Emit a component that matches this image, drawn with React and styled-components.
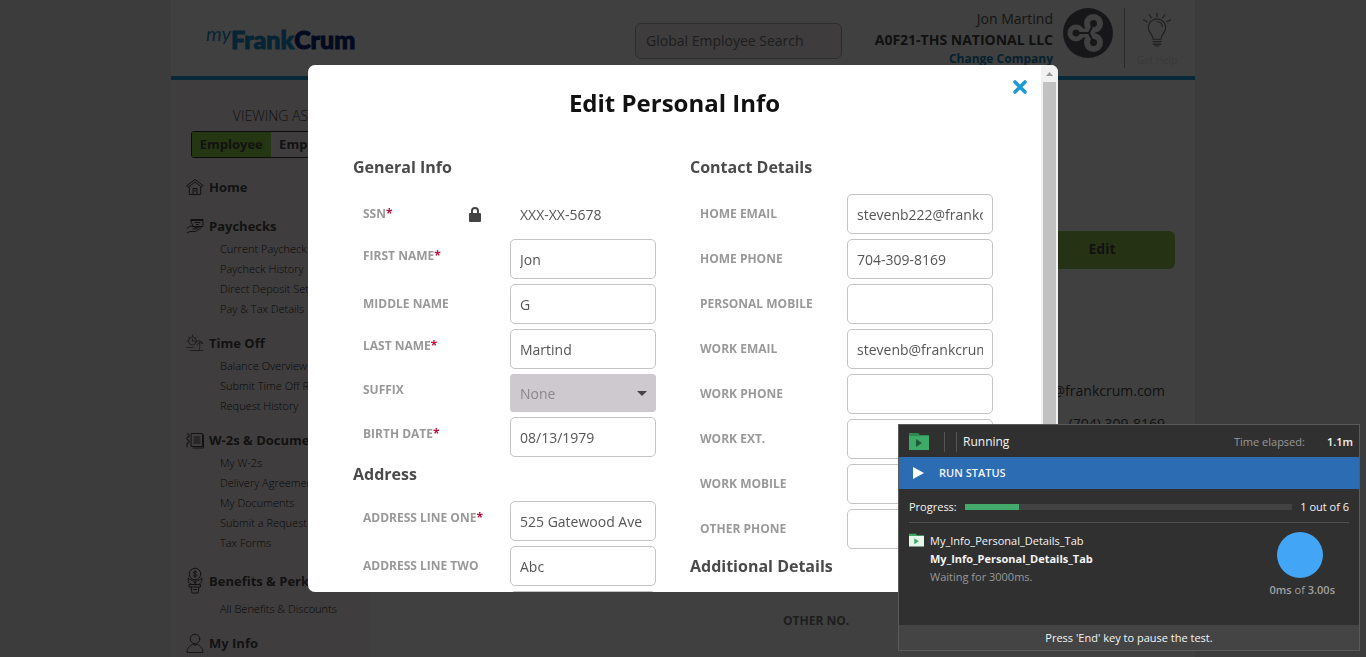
import React from "react";
import styled, { createGlobalStyle, css } from "styled-components";

const GlobalStyle = createGlobalStyle`
  *, *::before, *::after { box-sizing: border-box; }
  html, body { height: 100%; }
  body {
    margin: 0;
    overflow: hidden;
    background: #f0f0f0;
    color: #444;
    font-family: "Open Sans", "Noto Sans", sans-serif;
    font-size: 14px;
  }
  button, input, select { font: inherit; color: inherit; }
  h1, h2, p, ul, dl, dd { margin: 0; padding: 0; }
  ul { list-style: none; }
`;

/* ---------- Page ---------- */

const Page = styled.div`
  max-width: 1024px;
  margin: 0 auto;
  background: #fff;
`;

const Header = styled.header`
  display: flex;
  height: 80px;
  padding-right: 6px;
  border-bottom: 4px solid #1fa4e6;
`;

const Brand = styled.a`
  display: flex;
  align-items: baseline;
  align-self: center;
  margin: 2px 0 0 35px;
  color: #1b8fce;
  font: 900 25px/32px Lato, sans-serif;
  -webkit-text-stroke: 1px currentColor;
  text-decoration: none;
`;

const BrandScript = styled.span`
  align-self: flex-start;
  font: italic 400 20px/20px Lato, sans-serif;
  -webkit-text-stroke: 0;
`;

const BrandDark = styled.span`
  color: #0c2a80;
`;

const Search = styled.input`
  width: 207px;
  height: 36px;
  margin: 23px 0 0 auto;
  padding: 0 10px 2px;
  border: 1px solid #b8b4b6;
  border-radius: 6px;
  background: #f5eef2;
  &::placeholder { color: #777; opacity: 1; }
`;

const Account = styled.div`
  width: 211px;
  padding-top: 8px;
  text-align: right;
  line-height: 21px;
  white-space: nowrap;
`;

const AccountName = styled.p`
  color: #555;
`;

const Company = styled.p`
  color: #444;
  font-weight: 700;
`;

const CompanyLink = styled.a`
  display: block;
  color: #1583bd;
  font-size: 12px;
  font-weight: 700;
  line-height: 18px;
  text-decoration: none;
`;

const Avatar = styled.svg`
  width: 50px;
  height: 50px;
  margin: 8px 11px 0 10px;
`;

const Help = styled.button`
  display: flex;
  flex-direction: column;
  align-items: center;
  gap: 5px;
  width: 65px;
  height: 60px;
  margin-top: 8px;
  padding: 4px 0 0;
  border: 0;
  border-left: 1px solid #aaa;
  background: none;
  color: #e2e2e2;
  font-size: 10px;
  line-height: 16px;
`;

const Body = styled.div`
  display: flex;
  min-height: calc(100vh - 80px);
`;

const Sidebar = styled.nav`
  width: 199px;
  padding: 26px 0 0 15px;
  background: #fcf4f6;
  color: #4a4a4a;
`;

const Viewing = styled.p`
  padding-right: 15px;
  color: #444;
  font-weight: 300;
  line-height: 20px;
  text-align: center;
`;

const Toggle = styled.div`
  display: flex;
  width: 159px;
  height: 27px;
  margin: 5px 0 18px 5px;
  border: 1px solid #333;
  border-radius: 3px;
  overflow: hidden;
`;

const ToggleButton = styled.button`
  flex: 1;
  padding: 0 0 2px;
  border: 0;
  background: ${(p) => (p.$active ? "#90d648" : "transparent")};
  font-size: 13px;
  font-weight: 700;
`;

const Group = styled.li`
  margin-bottom: ${(p) => (p.$solo ? 18 : 13)}px;
`;

const GroupTitle = styled.a`
  display: flex;
  align-items: center;
  gap: 5px;
  min-height: 21px;
  margin-bottom: 3px;
  color: inherit;
  font-size: 13px;
  font-weight: 700;
  text-decoration: none;
  white-space: nowrap;
`;

const SubLink = styled.a`
  display: block;
  padding-left: 34px;
  color: #222;
  font-size: 11px;
  font-weight: 300;
  line-height: 20px;
  text-decoration: none;
  white-space: nowrap;
`;

const Main = styled.main`
  flex: 1;
  display: flex;
  flex-direction: column;
  align-items: flex-end;
  padding: 151px 20px 0;
`;

const EditButton = styled.button`
  width: 146px;
  height: 38px;
  padding: 0 0 3px;
  border: 0;
  border-radius: 6px;
  background: #92cc50;
  color: #444;
  font-weight: 700;
`;

const Contacts = styled.dl`
  width: 382px;
  margin: 105px 10px 0 0;
  color: #444;
`;

const OtherContacts = styled(Contacts)`
  margin-top: 164px;
`;

const ContactRow = styled.div`
  display: flex;
  justify-content: space-between;
  line-height: 33px;
`;

const ContactLabel = styled.dt`
  color: #777;
  font-size: 12px;
  font-weight: 700;
`;

/* ---------- Modal ---------- */

const Overlay = styled.div`
  position: fixed;
  inset: 0;
  display: flex;
  align-items: center;
  justify-content: center;
  background: rgba(0, 0, 0, 0.75);
`;

const Modal = styled.section`
  position: relative;
  display: flex;
  width: 750px;
  height: calc(100vh - 130px);
  border-radius: 7px;
  background: #fff;
  overflow: hidden;
`;

const ModalContent = styled.div`
  flex: 1;
  padding: 22px 14px 20px 45px;
  overflow-y: auto;
  scrollbar-width: none;
`;

const ModalTitle = styled.h1`
  margin-right: 31px;
  color: #111;
  font-size: 24px;
  font-weight: 700;
  line-height: 32px;
  text-align: center;
`;

const Close = styled.button`
  position: absolute;
  top: 15px;
  right: 31px;
  width: 14px;
  height: 14px;
  padding: 0;
  border: 0;
  background: none;
  svg { display: block; }
`;

const ScrollTrack = styled.div`
  display: flex;
  flex-direction: column;
  align-items: center;
  width: 17px;
  background: #f1f1f1;
`;

const ScrollArrow = styled.svg`
  width: 17px;
  height: 17px;
`;

const ScrollThumb = styled.div`
  width: 13px;
  height: 420px;
  background: #c1c1c1;
`;

const Columns = styled.form`
  display: grid;
  grid-template-columns: 1fr 1fr;
  margin-top: 36px;
`;

const SectionTitle = styled.h2`
  margin-bottom: 15px;
  color: #4a4a4a;
  font-size: 16px;
  font-weight: 700;
  line-height: 24px;
`;

const FieldRow = styled.div`
  display: flex;
  align-items: center;
  margin-bottom: 5px;
`;

const Label = styled.label`
  width: 157px;
  padding-left: 10px;
  padding-bottom: ${(p) => (p.$raised ? 7 : 1)}px;
  color: #999;
  font-size: 12px;
  font-weight: 700;
  line-height: 16px;
`;

const SsnLabel = styled(Label)`
  display: flex;
  justify-content: space-between;
  padding-right: 29px;
`;

const Star = styled.span`
  color: #b8123a;
`;

const control = css`
  width: 146px;
  height: 40px;
  padding: 0 9px;
  border: 1px solid #c4c4c4;
  border-radius: 5px;
  background: #fff;
  color: #555;
`;

const TextInput = styled.input`
  ${control}
`;

const StaticValue = styled.output`
  ${control}
  border-color: transparent;
  line-height: 40px;
`;

const SelectBox = styled.div`
  position: relative;
  width: 146px;
  height: 38px;
`;

const Select = styled.select`
  ${control}
  height: 38px;
  border-color: #cec9ce;
  border-radius: 3px;
  background: #cec9ce;
  color: #888;
  opacity: 1;
  appearance: none;
`;

const Caret = styled.svg`
  position: absolute;
  top: 17px;
  right: 9px;
`;

/* ---------- Test runner panel ---------- */

const Runner = styled.aside`
  position: fixed;
  right: 6px;
  bottom: 6px;
  width: 462px;
  border: 1px solid #5a5a5a;
  background: #303030;
  color: #f4f4f4;
  font-size: 11px;
  line-height: 18px;
`;

const RunnerHeader = styled.div`
  display: flex;
  align-items: center;
  height: 32px;
  padding: 1px 6px 0 10px;
`;

const Separator = styled.span`
  width: 12px;
  height: 20px;
  border-left: 1px solid #555;
`;

const FirstSeparator = styled(Separator)`
  margin-left: 15px;
`;

const State = styled.span`
  margin: 0 auto 0 -5px;
  font-size: 12px;
`;

const Muted = styled.span`
  color: #999;
`;

const Elapsed = styled.span`
  margin-left: 22px;
  font-weight: 600;
`;

const RunnerBar = styled.div`
  display: flex;
  align-items: center;
  gap: 15px;
  height: 32px;
  padding-left: 14px;
  background: #2b6cb3;
  font-weight: 600;
`;

const RunnerBody = styled.div`
  height: 136px;
  padding: 0 10px;
`;

const ProgressRow = styled.div`
  display: flex;
  align-items: center;
  gap: 8px;
  height: 34px;
  padding-top: 2px;
  border-bottom: 1px solid #505050;
  white-space: nowrap;
`;

const Track = styled.div`
  flex: 1;
  height: 6px;
  background: #424242;
`;

const Fill = styled.div`
  height: 6px;
  background: #45ab6d;
`;

const TestRow = styled.div`
  display: flex;
  justify-content: space-between;
  padding: 9px 14px 0 0;
`;

const TestInfo = styled.div`
  display: flex;
  gap: 6px;
  svg { margin-top: 1px; }
`;

const TestName = styled.p`
  font-weight: ${(p) => (p.$bold ? 700 : 400)};
`;

const Timer = styled.div`
  display: flex;
  flex-direction: column;
  align-items: center;
  gap: 3px;
`;

const TimerDisc = styled.div`
  width: 46px;
  height: 46px;
  margin-right: 4px;
  border-radius: 50%;
  background: #42a5f5;
`;

const TimerText = styled(Muted)`
  color: #a0a0a0;
  b { font-weight: 600; }
`;

const RunnerFooter = styled.div`
  height: 25px;
  background: #444;
  line-height: 25px;
  text-align: center;
`;

/* ---------- Drawings ---------- */

const line = { fill: "none", stroke: "#4a4a4a", strokeWidth: 1, strokeLinecap: "round", strokeLinejoin: "round" };

const icons = {
  home: (
    <svg width="18" height="18" viewBox="0 0 18 18" {...line}>
      <path d="M1 7.500 9 1.500l8 6-1.400 1.600L9 4 2.400 9.100z M3.300 9v7.500h11.400V9M7 16v-5.500h4V16M9 12v1.500" />
    </svg>
  ),
  pay: (
    <svg width="18" height="18" viewBox="0 0 18 18" {...line}>
      <path d="M5 3.500h12v6H7.500zM5 2.500h12M9 5.500h5M10.500 7.500h2M1 11.500l3-2.500 3 .5 3.500 1-1 1.500H7M1 16l3-1.500h5.500l6-4-1-1-4.500 2" />
    </svg>
  ),
  time: (
    <svg width="18" height="18" viewBox="0 0 18 18" {...line} stroke="#777">
      <circle cx="6.500" cy="7" r="4" />
      <path d="M6.500 1v1.500M1 7h1.500M2.500 3l1 1M10.500 3l-1 1M6.500 5v2H9M9 9c1-2.500 6-3 8 .5l-3.500-1L11 11M13.500 8.500c.5 3 .3 5 0 8M4 16.500h13M1 13.500c2-1 4 1 6 0" />
    </svg>
  ),
  docs: (
    <svg width="18" height="18" viewBox="0 0 18 18" {...line}>
      <path d="M5.500 2.500h11v13h-11zM17.500 4v13H7M8 6h6M8 8h6M8 10h6M8 12h6M1 3h2v3H1v3h2v3H1v4" />
    </svg>
  ),
  benefits: (
    <svg width="18" height="30" viewBox="0 0 18 30" {...line}>
      <circle cx="9" cy="8" r="5.800" />
      <path d="M10.800 6.300c-1-1.200-3.400-.9-3.400.5 0 1.700 3.500.8 3.500 2.500 0 1.400-2.700 1.600-3.700.3M9 4.700v6.800M9 14v5M9 17c-1-3-4-2-7-5 0 3 1 6 3 6M9 17c1-3 4-2 7-5 0 3-1 6-3 6M3.500 18.500h11v2.500h-11zM5 21l1 6h6l1-6M7.500 23.500h3" />
    </svg>
  ),
  user: (
    <svg width="18" height="20" viewBox="0 0 18 20" {...line}>
      <circle cx="9" cy="6" r="4.800" />
      <path d="M1 19c.3-4.500 3-6 5.500-7.700l2.500 1 2.500-1C14 13 16.700 14.500 17 19z" />
    </svg>
  ),
};

const CompanyMark = () => (
  <Avatar viewBox="0 0 50 50" aria-hidden="true">
    <circle cx="25" cy="25" r="25" fill="#5c5c68" />
    <g fill="#fff">
      <circle cx="13" cy="25" r="8.500" />
      <circle cx="30.500" cy="15.500" r="9.500" />
      <circle cx="30.500" cy="34.500" r="9.500" />
    </g>
    <path d="M14 25h12l4-8M26 25l4 8" fill="none" stroke="#fff" strokeWidth="9" />
    <path d="M13 25h13l4.500-9.500M26 25l4.500 9.500" fill="none" stroke="#5c5c68" strokeWidth="2" />
    <g fill="#5c5c68">
      <circle cx="13" cy="25" r="3.500" />
      <circle cx="30.500" cy="15.500" r="3.500" />
      <circle cx="30.500" cy="34.500" r="3.500" />
    </g>
  </Avatar>
);

const Bulb = () => (
  <svg width="30" height="36" viewBox="0 0 30 36" fill="none" stroke="#777" strokeWidth="1.200" strokeLinecap="round">
    <path d="M11 28c0-5-5-6-5-12a9 9 0 0 1 18 0c0 6-5 7-5 12zM11 30.500h8M11 33h8M13 35h4M15 1v4M7 2.500l2 3.500M23 2.500 21 6M1 8l4 2M29 8l-4 2M15 10c3 0 5.500 2 5.500 5" />
  </svg>
);

const Folder = ({ size, body, tab, arrow }) => (
  <svg width={size} height={size} viewBox="0 0 20 20" aria-hidden="true">
    <path d="M0 1h9l2 2h9v5H0z" fill={tab} />
    <path d="M0 4h20v14H0z" fill={body} />
    <path d="M7 7v8l6-4z" fill={arrow} />
  </svg>
);

/* ---------- Data ---------- */

const menu = [
  { title: "Home", icon: "home", links: [] },
  { title: "Paychecks", icon: "pay", links: ["Current Paycheck", "Paycheck History", "Direct Deposit Setup", "Pay & Tax Details"] },
  { title: "Time Off", icon: "time", links: ["Balance Overview", "Submit Time Off Request", "Request History"] },
  { title: "W-2s & Documents", icon: "docs", links: ["My W-2s", "Delivery Agreement", "My Documents", "Submit a Request", "Tax Forms"] },
  { title: "Benefits & Perks", icon: "benefits", links: ["All Benefits & Discounts"] },
  { title: "My Info", icon: "user", links: [] },
];

const contacts = [
  ["HOME EMAIL", "stevenb222@frankcrum.com"],
  ["HOME PHONE", "(704) 309-8169"],
];

const general = [
  { label: "FIRST NAME", value: "Jon", required: true },
  { label: "MIDDLE NAME", value: "G" },
  { label: "LAST NAME", value: "Martind", required: true },
  { label: "SUFFIX", value: "None", select: true },
  { label: "BIRTH DATE", value: "08/13/1979", required: true },
];

const address = [
  { label: "ADDRESS LINE ONE", value: "525 Gatewood Ave", required: true },
  { label: "ADDRESS LINE TWO", value: "Abc" },
  { label: "CITY", value: "", required: true },
];

const contactFields = [
  { label: "HOME EMAIL", value: "stevenb222@frankcrum.com" },
  { label: "HOME PHONE", value: "704-309-8169" },
  { label: "PERSONAL MOBILE", value: "" },
  { label: "WORK EMAIL", value: "stevenb@frankcrum.com" },
  { label: "WORK PHONE", value: "" },
  { label: "WORK EXT.", value: "" },
  { label: "WORK MOBILE", value: "" },
  { label: "OTHER PHONE", value: "" },
];

function Field({ label, value, required, select }) {
  const id = label.toLowerCase().replace(/[^a-z]+/g, "-");
  return (
    <FieldRow>
      <Label htmlFor={id} $raised={required || select}>
        {label}
        {required && <Star>*</Star>}
      </Label>
      {select ? (
        <SelectBox>
          <Select id={id} disabled defaultValue={value}>
            <option>{value}</option>
          </Select>
          <Caret width="10" height="5" viewBox="0 0 10 5">
            <path d="M0 0h10L5 5z" fill="#444" />
          </Caret>
        </SelectBox>
      ) : (
        <TextInput id={id} type="text" defaultValue={value} />
      )}
    </FieldRow>
  );
}

const Fields = ({ items }) => items.map((f) => <Field key={f.label} {...f} />);

function EditPersonalInfo() {
  return (
    <Modal role="dialog" aria-labelledby="edit-title">
      <ModalContent>
        <ModalTitle id="edit-title">Edit Personal Info</ModalTitle>
        <Columns>
          <div>
            <SectionTitle>General Info</SectionTitle>
            <FieldRow>
              <SsnLabel htmlFor="ssn">
                <span>SSN<Star>*</Star></span>
                <svg width="12" height="16" viewBox="0 0 12 16" aria-hidden="true">
                  <path d="M3 8V5a3 3 0 0 1 6 0v3" fill="none" stroke="#444" strokeWidth="2" />
                  <rect y="7" width="12" height="9" rx="1" fill="#444" />
                </svg>
              </SsnLabel>
              <StaticValue id="ssn">XXX-XX-5678</StaticValue>
            </FieldRow>
            <Fields items={general} />
            <SectionTitle>Address</SectionTitle>
            <Fields items={address} />
          </div>
          <div>
            <SectionTitle>Contact Details</SectionTitle>
            <Fields items={contactFields} />
            <SectionTitle>Additional Details</SectionTitle>
          </div>
        </Columns>
      </ModalContent>
      <ScrollTrack aria-hidden="true">
        <ScrollArrow viewBox="0 0 17 17">
          <path d="M5 11h7L8.500 7z" fill="#999" />
        </ScrollArrow>
        <ScrollThumb />
      </ScrollTrack>
      <Close type="button" aria-label="Close">
        <svg width="14" height="14" viewBox="0 0 14 14">
          <path d="M2 2l10 10M12 2 2 12" stroke="#1c9bd8" strokeWidth="3.600" strokeLinecap="round" />
        </svg>
      </Close>
    </Modal>
  );
}

function RunnerPanel() {
  return (
    <Runner>
      <RunnerHeader>
        <Folder size={20} body="#3fa968" tab="#2f8a52" arrow="#1f5a38" />
        <FirstSeparator />
        <Separator />
        <State>Running</State>
        <Muted>Time elapsed:</Muted>
        <Elapsed>1.1m</Elapsed>
      </RunnerHeader>
      <RunnerBar>
        <svg width="11" height="12" viewBox="0 0 11 12" aria-hidden="true">
          <path d="M0 0v12l11-6z" fill="#fff" />
        </svg>
        RUN STATUS
      </RunnerBar>
      <RunnerBody>
        <ProgressRow>
          Progress:
          <Track>
            <Fill style={{ width: `${(1 / 6) * 100}%` }} />
          </Track>
          1 out of 6
        </ProgressRow>
        <TestRow>
          <TestInfo>
            <Folder size={15} body="#e4f7ea" tab="#3fa968" arrow="#3fa968" />
            <div>
              <TestName>My_Info_Personal_Details_Tab</TestName>
              <TestName $bold>My_Info_Personal_Details_Tab</TestName>
              <Muted>Waiting for 3000ms.</Muted>
            </div>
          </TestInfo>
          <Timer>
            <TimerDisc />
            <TimerText><b>0ms</b> of <b>3.00s</b></TimerText>
          </Timer>
        </TestRow>
      </RunnerBody>
      <RunnerFooter>Press 'End' key to pause the test.</RunnerFooter>
    </Runner>
  );
}

export default function App() {
  return (
    <>
      <GlobalStyle />
      <Page>
        <Header>
          <Brand href="#">
            <BrandScript>my</BrandScript>
            Frank<BrandDark>Crum</BrandDark>
          </Brand>
          <Search type="search" placeholder="Global Employee Search" aria-label="Global Employee Search" />
          <Account>
            <AccountName>Jon Martind</AccountName>
            <Company>A0F21-THS NATIONAL LLC</Company>
            <CompanyLink href="#">Change Company</CompanyLink>
          </Account>
          <CompanyMark />
          <Help type="button">
            <Bulb />
            Get Help
          </Help>
        </Header>
        <Body>
          <Sidebar>
            <Viewing>VIEWING AS</Viewing>
            <Toggle>
              <ToggleButton type="button" $active>Employee</ToggleButton>
              <ToggleButton type="button">Employer</ToggleButton>
            </Toggle>
            <ul>
              {menu.map((g) => (
                <Group key={g.title} $solo={!g.links.length}>
                  <GroupTitle href="#">
                    {icons[g.icon]}
                    {g.title}
                  </GroupTitle>
                  {g.links.map((l) => (
                    <SubLink href="#" key={l}>{l}</SubLink>
                  ))}
                </Group>
              ))}
            </ul>
          </Sidebar>
          <Main>
            <EditButton type="button">Edit</EditButton>
            <Contacts>
              {contacts.map(([label, value]) => (
                <ContactRow key={label}>
                  <ContactLabel>{label}</ContactLabel>
                  <dd>{value}</dd>
                </ContactRow>
              ))}
            </Contacts>
            <OtherContacts>
              <ContactRow>
                <ContactLabel>OTHER NO.</ContactLabel>
                <dd />
              </ContactRow>
            </OtherContacts>
          </Main>
        </Body>
      </Page>
      <Overlay>
        <EditPersonalInfo />
      </Overlay>
      <RunnerPanel />
    </>
  );
}
